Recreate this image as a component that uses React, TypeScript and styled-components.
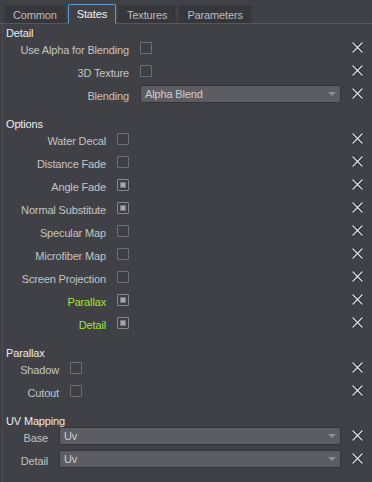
import React, { FC } from "react";
import styled, { createGlobalStyle, css } from "styled-components";

const GlobalStyle = createGlobalStyle`
  html, body {
    margin: 0;
    padding: 0;
    background: #404146;
  }
  body {
    font-family: "Liberation Sans", Arial, sans-serif;
    font-size: 11px;
    letter-spacing: -0.15px;
    color: #c6c6c6;
  }
`;

const Window = styled.div`
  width: 372px;
  height: 482px;
  background: #404146;
  overflow: hidden;
`;

const TabBar = styled.div`
  display: flex;
  align-items: flex-end;
  gap: 2px;
  height: 24px;
  padding-left: 4px;
  box-sizing: border-box;
  border-bottom: 1px solid #56575c;
`;

const Tab = styled.div<{ active?: boolean }>`
  height: 18px;
  padding: 0 8px;
  display: flex;
  align-items: center;
  box-sizing: border-box;
  background: #36373b;
  color: #bdbdbd;
  border: 1px solid #3b3c40;
  border-bottom: none;
  border-radius: 2px 2px 0 0;
  ${({ active }) =>
    active &&
    css`
      height: 20px;
      margin-bottom: -1px;
      background: #404146;
      color: #f2f2f2;
      border: 1px solid #5d9ccc;
      border-bottom: 1px solid #404146;
    `}
`;

const Content = styled.div`
  margin-left: 2px;
  border-left: 1px solid #4c4d52;
  padding-top: 2px;
  min-height: 460px;
`;

const Section = styled.div<{ first?: boolean }>`
  margin-top: ${({ first }) => (first ? 0 : 12)}px;
`;

const Header = styled.div`
  height: 10px;
  line-height: 14px;
  padding-left: 3px;
  color: #ececec;
  white-space: nowrap;
`;

const Row = styled.div<{ labelWidth: number }>`
  display: grid;
  grid-template-columns: ${({ labelWidth }) => labelWidth}px 1fr 11px;
  column-gap: 11px;
  align-items: center;
  height: 23px;
  padding-right: 9px;
`;

const Label = styled.div<{ highlight?: boolean }>`
  text-align: right;
  white-space: nowrap;
  padding-top: 5px;
  color: ${({ highlight }) => (highlight ? "#a6e23a" : "#c4c4c4")};
`;

const Box = styled.div<{ checked?: boolean }>`
  position: relative;
  width: 12px;
  height: 12px;
  box-sizing: border-box;
  border: 1px solid ${({ checked }) => (checked ? "#86878b" : "#6e6f74")};
  border-radius: 1px;
  background: #3e3f44;
  ${({ checked }) =>
    checked &&
    css`
      &::after {
        content: "";
        position: absolute;
        left: 2px;
        top: 2px;
        width: 6px;
        height: 6px;
        box-sizing: border-box;
        background: #a9a9a9;
        border: 1px solid #77787c;
      }
    `}
`;

const Combo = styled.div`
  height: 18px;
  box-sizing: border-box;
  display: flex;
  align-items: center;
  justify-content: space-between;
  padding: 0 4px 0 4px;
  background: #5c5d62;
  border: 1px solid #333438;
  border-radius: 2px;
  color: #cfcfcf;
`;

const Arrow = styled.span`
  width: 0;
  height: 0;
  border-left: 4px solid transparent;
  border-right: 4px solid transparent;
  border-top: 4px solid #8e8f93;
`;

const ClearIcon = styled.svg`
  width: 11px;
  height: 11px;
  display: block;
`;

const Clear: FC = () => (
  <ClearIcon viewBox="0 0 11 11">
    <path d="M1 1 L10 10 M10 1 L1 10" stroke="#1e1f22" strokeWidth="2.6" strokeLinecap="square" />
    <path d="M1 1 L10 10 M10 1 L1 10" stroke="#e2e2e2" strokeWidth="1.3" strokeLinecap="square" />
  </ClearIcon>
);

type Item =
  | { label: string; kind: "check"; checked?: boolean; highlight?: boolean }
  | { label: string; kind: "combo"; value: string };

interface Group {
  title: string;
  labelWidth: number;
  items: Item[];
}

const groups: Group[] = [
  {
    title: "Detail",
    labelWidth: 126,
    items: [
      { label: "Use Alpha for Blending", kind: "check" },
      { label: "3D Texture", kind: "check" },
      { label: "Blending", kind: "combo", value: "Alpha Blend" },
    ],
  },
  {
    title: "Options",
    labelWidth: 103,
    items: [
      { label: "Water Decal", kind: "check" },
      { label: "Distance Fade", kind: "check" },
      { label: "Angle Fade", kind: "check", checked: true },
      { label: "Normal Substitute", kind: "check", checked: true },
      { label: "Specular Map", kind: "check" },
      { label: "Microfiber Map", kind: "check" },
      { label: "Screen Projection", kind: "check" },
      { label: "Parallax", kind: "check", checked: true, highlight: true },
      { label: "Detail", kind: "check", checked: true, highlight: true },
    ],
  },
  {
    title: "Parallax",
    labelWidth: 56,
    items: [
      { label: "Shadow", kind: "check" },
      { label: "Cutout", kind: "check" },
    ],
  },
  {
    title: "UV Mapping",
    labelWidth: 45,
    items: [
      { label: "Base", kind: "combo", value: "Uv" },
      { label: "Detail", kind: "combo", value: "Uv" },
    ],
  },
];

const tabs = ["Common", "States", "Textures", "Parameters"];

export default function App() {
  return (
    <Window>
      <GlobalStyle />
      <TabBar>
        {tabs.map((t) => (
          <Tab key={t} active={t === "States"}>
            {t}
          </Tab>
        ))}
      </TabBar>
      <Content>
        {groups.map((g, i) => (
          <Section key={g.title} first={i === 0}>
            <Header>{g.title}</Header>
            {g.items.map((it) => (
              <Row key={it.label} labelWidth={g.labelWidth}>
                <Label highlight={it.kind === "check" && it.highlight}>{it.label}</Label>
                {it.kind === "check" ? (
                  <Box checked={it.checked} />
                ) : (
                  <Combo>
                    <span>{it.value}</span>
                    <Arrow />
                  </Combo>
                )}
                <Clear />
              </Row>
            ))}
          </Section>
        ))}
      </Content>
    </Window>
  );
}
